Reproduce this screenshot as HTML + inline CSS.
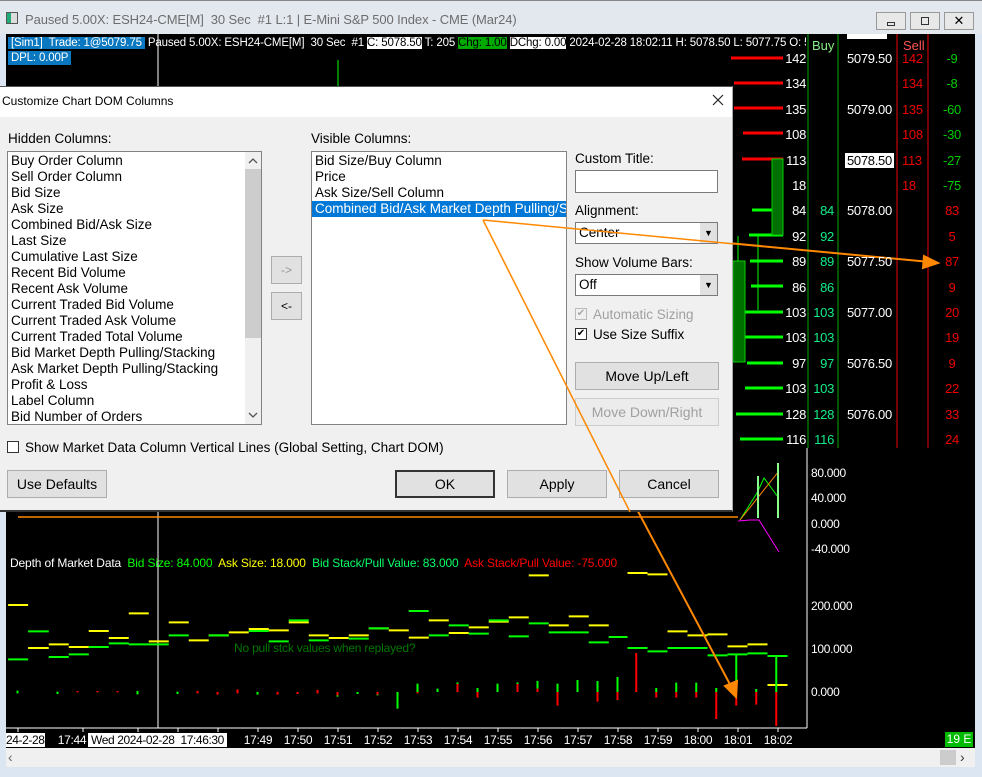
<!DOCTYPE html>
<html><head><meta charset="utf-8"><style>
*{margin:0;padding:0;box-sizing:border-box}
body{width:982px;height:777px;background:#dce6f2;position:relative;overflow:hidden;font-family:"Liberation Sans",sans-serif;font-size:13px}
.a{position:absolute;white-space:nowrap}
.btn{position:absolute;background:#e1e1e1;border:1px solid #adadad;text-align:center;color:#000;font-size:14px}
.list div{height:16px;line-height:16px;font-size:13.5px;padding-left:3px}
.t{position:absolute;top:733px;font-size:12px;color:#fff;width:40px;text-align:center;letter-spacing:-0.3px}
</style></head><body>
<div class="a" style="left:0;top:0;width:982px;height:34px;background:#e3e8ef;border-top:1px solid #888"></div>
<div class="a" style="left:6px;top:12px;width:12px;height:12px;border:1px solid #555;background:linear-gradient(90deg,#2a7 0 40%,#ddd 40%)"></div>
<div class="a" style="left:25px;top:12px;color:#6d6d6d;font-size:13px;letter-spacing:-0.1px">Paused 5.00X: ESH24-CME[M]&nbsp; 30 Sec&nbsp; #1 L:1 | E-Mini S&amp;P 500 Index - CME (Mar24)</div>
<div class="a" style="left:876px;top:12px;width:30px;height:18px;border:1px solid #999;background:#e8e8e8"><div class="a" style="left:10px;top:9px;width:8px;height:4px;border:1px solid #333"></div></div>
<div class="a" style="left:910px;top:12px;width:30px;height:18px;border:1px solid #999;background:#e8e8e8"><div class="a" style="left:10px;top:4px;width:8px;height:8px;border:1px solid #333"></div></div>
<div class="a" style="left:944px;top:12px;width:30px;height:18px;border:1px solid #999;background:#e8e8e8;text-align:center;font-size:13px;line-height:16px">✕</div>
<div class="a" style="left:6px;top:34px;width:969px;height:714px;background:#000"></div>
<div class="a" style="left:6px;top:748px;width:969px;height:19px;background:#f0f0f0"></div>
<div class="a" style="left:8px;top:749px;color:#666;font-size:14px">‹</div>
<div class="a" style="left:940px;top:750px;width:16px;height:15px;background:#ccc"></div>
<div class="a" style="left:960px;top:749px;color:#333;font-size:14px">›</div>
<div class="a" style="left:8px;top:36px;font-size:11.5px;letter-spacing:-0.15px;color:#fff;line-height:14px;width:798px;overflow:hidden">
<span style="background:#0a78c0;padding:0 3px">[Sim1]&nbsp; Trade: 1@5079.75</span> Paused 5.00X: ESH24-CME[M]&nbsp; 30 Sec&nbsp; #1 <span style="background:#fff;color:#000">C: 5078.50</span> T: 205 <span style="background:#0a0;color:#000">Chg: 1.00</span> <span style="background:#fff;color:#000">DChg: 0.00</span> 2024-02-28 18:02:11 H: 5078.50 L: 5077.75 O: 50</div>
<div class="a" style="left:8px;top:51px;font-size:11.5px;letter-spacing:-0.15px;color:#fff;background:#0a78c0;padding:0 3px;line-height:14px">DPL: 0.00P</div>
<svg class="a" style="left:0;top:0" width="982" height="777">
<line x1="158" y1="34" x2="158" y2="728" stroke="#fff"/>
<line x1="338" y1="60" x2="338" y2="86" stroke="#0f0"/>
<line x1="808" y1="34" x2="808" y2="448" stroke="#0a0"/>
<line x1="838" y1="34" x2="838" y2="448" stroke="#0a0"/>
<line x1="897" y1="34" x2="897" y2="448" stroke="#e00"/>
<line x1="928" y1="34" x2="928" y2="448" stroke="#e00"/>
<g stroke-width="3">
<line x1="731" y1="58" x2="783" y2="58" stroke="#f00"/>
<line x1="734" y1="83" x2="783" y2="83" stroke="#f00"/>
<line x1="734" y1="108" x2="783" y2="108" stroke="#f00"/>
<line x1="743" y1="133" x2="783" y2="133" stroke="#f00"/>
<line x1="742" y1="159" x2="783" y2="159" stroke="#f00"/>
<line x1="776" y1="184" x2="783" y2="184" stroke="#f00"/>
<line x1="752" y1="210" x2="783" y2="210" stroke="#0f0"/>
<line x1="749" y1="235" x2="783" y2="235" stroke="#0f0"/>
<line x1="750" y1="261" x2="783" y2="261" stroke="#0f0"/>
<line x1="751" y1="286" x2="783" y2="286" stroke="#0f0"/>
<line x1="745" y1="312" x2="783" y2="312" stroke="#0f0"/>
<line x1="745" y1="337" x2="783" y2="337" stroke="#0f0"/>
<line x1="747" y1="363" x2="783" y2="363" stroke="#0f0"/>
<line x1="745" y1="388" x2="783" y2="388" stroke="#0f0"/>
<line x1="736" y1="414" x2="783" y2="414" stroke="#0f0"/>
<line x1="740" y1="439" x2="783" y2="439" stroke="#0f0"/>
</g>
<rect x="772" y="159" width="11" height="76" fill="#007000" stroke="#0c0"/>
<rect x="733" y="261" width="12" height="101" fill="#007000" stroke="#0c0"/>
<line x1="758" y1="235" x2="758" y2="310" stroke="#0f0"/>
<line x1="738" y1="236" x2="738" y2="261" stroke="#0f0"/>
<line x1="807" y1="448" x2="807" y2="728" stroke="#fff"/>
<line x1="18" y1="517" x2="738" y2="517" stroke="#f80" stroke-width="1.5"/>
<polyline points="740,520 757,493 764,478 778,497" fill="none" stroke="#0f0"/>
<polyline points="740,520 779,471" fill="none" stroke="#f80"/>
<polyline points="738,521 750,520 759,520 779,552" fill="none" stroke="#f0f"/>
<line x1="758" y1="476" x2="758" y2="518" stroke="#8f8" stroke-width="2"/>
<line x1="778" y1="463" x2="778" y2="518" stroke="#8f8" stroke-width="2"/>
<g transform="translate(0,500) scale(0.625,0.3333)" stroke-width="2">
<path stroke="#ff0" vector-effect="non-scaling-stroke" d="M13 315H45M45 444H78M78 433H110M110 441H142M142 393H174M174 414H206M206 340H238M238 424H270M270 367H302M302 421H334M334 406H366M366 397H398M398 387H430M430 391H462M462 367H494M494 406H526M526 414H558M558 406H590M590 385H622M622 391H654M654 413H686M686 361H718M718 399H750M750 382H782M782 365H814M814 352H846M846 226H878M878 376H910M910 349H942M942 376H974M1004 219H1036M1036 223H1068M1068 394H1100M1100 406H1132M1132 403H1164M1164 439H1196M1196 433H1228M1228 555H1260"/>
<path stroke="#0f0" vector-effect="non-scaling-stroke" d="M13 478H45M45 394H78M78 471H110M110 463H142M142 441H174M174 430H206M206 433H238M238 433H270M270 406H302M334 406H366M398 393H430M430 424H462M462 361H494M494 421H526M558 416H590M590 385H622M654 333H686M686 406H718M718 376H750M750 401H782M782 361H814M814 409H846M846 370H878M878 397H942M942 427H974M974 411H1004M1004 444H1036M1036 454H1068M1068 444H1132M1132 466H1164M1164 463H1196M1196 460H1228M1228 468H1260"/>
<path stroke="#0f0" vector-effect="non-scaling-stroke" d="M28 572V580M92 575V582M220 573V583M284 575V582M412 576V584M540 576V590M572 576V582M604 576V586M636 576V626M668 551V576M700 566V576M732 547V552M764 564V576M796 551V576M828 547V552M860 543V566M892 551V576M924 540V576M956 543V576M988 531V576M1050 564V576M1082 548V576M1114 548V576M1146 564V576M1178 463V576M1210 567V576M1242 468V576"/>
<path stroke="#f00" vector-effect="non-scaling-stroke" d="M124 573V577M156 573V577M188 573V577M316 573V580M348 576V584M380 568V580M444 576V584M476 576V582M508 570V580M540 576V586M604 576V584M668 576V580M732 552V576M764 576V593M828 552V576M860 566V576M892 576V617M956 576V605M988 576V600M1018 459V576M1050 576V593M1082 576V593M1114 576V593M1146 576V657M1178 576V617M1210 576V614M1242 576V678"/>
</g>
<line x1="6" y1="728" x2="807" y2="728" stroke="#fff"/>
<g stroke="#fff"><path d="M18 728v4M83 728v4M138 728v4M178 728v4M218 728v4M258 728v4M298 728v4M338 728v4M378 728v4M418 728v4M458 728v4M498 728v4M538 728v4M578 728v4M618 728v4M658 728v4M698 728v4M738 728v4M778 728v4"/></g>
<g stroke="#f80" stroke-width="2" fill="#f80">
<line x1="483" y1="220" x2="930" y2="262"/>
<polygon points="938,263 924,256 923,268"/>
<line x1="483" y1="220" x2="733" y2="690"/>
<polygon points="736,697 725,686 737,681"/>
</g>
</svg>
<div class="a" style="left:760px;top:46px;width:46px;text-align:right;color:#fff;font-size:13px;line-height:25.4px;letter-spacing:-0.3px">142<br>134<br>135<br>108<br>113<br>18<br>84<br>92<br>89<br>86<br>103<br>103<br>97<br>103<br>128<br>116</div>
<div class="a" style="left:808px;top:46px;width:26px;text-align:right;color:#1e8;font-size:13px;line-height:25.4px;letter-spacing:-0.3px"><br><br><br><br><br><br>84<br>92<br>89<br>86<br>103<br>103<br>97<br>103<br>128<br>116</div>
<div class="a" style="left:812px;top:38px;color:#8e8;font-size:13px">Buy</div>
<div class="a" style="left:903px;top:38px;color:#f55;font-size:13px">Sell</div>
<div class="a" style="left:847px;top:34px;width:40px;height:5px;background:#fff"></div>
<div class="a" style="left:847px;top:46px;color:#fff;font-size:13px;line-height:25.4px;letter-spacing:-0.3px">5079.50<br><br>5079.00<br><br><span style="background:#fff;color:#000;padding:0 2px;margin-left:-2px">5078.50</span><br><br>5078.00<br><br>5077.50<br><br>5077.00<br><br>5076.50<br><br>5076.00</div>
<div class="a" style="left:902px;top:46px;color:#e00;font-size:13px;line-height:25.4px;letter-spacing:-0.3px">142<br>134<br>135<br>108<br>113<br>18</div>
<div class="a" style="left:930px;top:46px;width:44px;text-align:center;font-size:13px;line-height:25.4px;letter-spacing:-0.3px"><span style="color:#0c0">-9<br>-8<br>-60<br>-30<br>-27<br>-75</span><br><span style="color:#e00">83<br>5<br>87<br>9<br>20<br>19<br>9<br>22<br>33<br>24</span></div>
<div class="a" style="left:811px;top:461px;color:#fff;font-size:12px;line-height:25.4px;letter-spacing:-0.3px">80.000<br>40.000<br>0.000<br>-40.000</div>
<div class="a" style="left:811px;top:599px;color:#fff;font-size:12px;letter-spacing:-0.3px">200.000</div>
<div class="a" style="left:811px;top:642px;color:#fff;font-size:12px;letter-spacing:-0.3px">100.000</div>
<div class="a" style="left:811px;top:685px;color:#fff;font-size:12px;letter-spacing:-0.3px">0.000</div>
<div class="a" style="left:10px;top:556px;font-size:12px;letter-spacing:-0.15px;color:#fff">Depth of Market Data&nbsp; <span style="color:#0f0">Bid Size: 84.000</span>&nbsp; <span style="color:#ff0">Ask Size: 18.000</span>&nbsp; <span style="color:#0f6">Bid Stack/Pull Value: 83.000</span>&nbsp; <span style="color:#f00">Ask Stack/Pull Value: -75.000</span></div>
<div class="a" style="left:234px;top:641px;font-size:12px;letter-spacing:-0.2px;color:#070">No pull stck values when replayed?</div>
<div class="a" style="left:6px;top:733px;font-size:12px;letter-spacing:-0.4px;background:#fff;color:#000">24-2-28</div>
<div class="t" style="left:52px">17:44</div>
<div class="a" style="left:88px;top:733px;font-size:12px;letter-spacing:-0.4px;background:#fff;color:#000;padding:0 3px">Wed 2024-02-28&nbsp; 17:46:30</div>
<div class="t" style="left:238px">17:49</div><div class="t" style="left:278px">17:50</div><div class="t" style="left:318px">17:51</div><div class="t" style="left:358px">17:52</div><div class="t" style="left:398px">17:53</div><div class="t" style="left:438px">17:54</div><div class="t" style="left:478px">17:55</div><div class="t" style="left:518px">17:56</div><div class="t" style="left:558px">17:57</div><div class="t" style="left:598px">17:58</div><div class="t" style="left:638px">17:59</div><div class="t" style="left:678px">18:00</div><div class="t" style="left:718px">18:01</div><div class="t" style="left:758px">18:02</div>
<div class="a" style="left:945px;top:732px;width:28px;height:15px;background:#0b0;color:#fff;font-size:12px;text-align:center">19 E</div>
<div class="a" style="left:0;top:86px;width:733px;height:426px;background:#f0f0f0;border-top:1px solid #555;border-right:1px solid #aaa;border-bottom:2px solid #333"></div>
<div class="a" style="left:0;top:87px;width:732px;height:30px;background:#fff"></div>
<div class="a" style="left:2px;top:94px;font-size:12px;color:#000">Customize Chart DOM Columns</div>
<svg class="a" style="left:712px;top:94px" width="12" height="12"><path d="M1 1L11 11M11 1L1 11" stroke="#222" stroke-width="1.2"/></svg>
<div class="a" style="left:8px;top:131px;font-size:13.5px">Hidden Columns:</div>
<div class="a" style="left:311px;top:131px;font-size:13.5px">Visible Columns:</div>
<div class="a list" style="left:7px;top:151px;width:255px;height:274px;background:#fff;border:1px solid #828282;padding-top:1px">
<div>Buy Order Column</div><div>Sell Order Column</div><div>Bid Size</div><div>Ask Size</div><div>Combined Bid/Ask Size</div><div>Last Size</div><div>Cumulative Last Size</div><div>Recent Bid Volume</div><div>Recent Ask Volume</div><div>Current Traded Bid Volume</div><div>Current Traded Ask Volume</div><div>Current Traded Total Volume</div><div>Bid Market Depth Pulling/Stacking</div><div>Ask Market Depth Pulling/Stacking</div><div>Profit &amp; Loss</div><div>Label Column</div><div>Bid Number of Orders</div>
</div>
<div class="a" style="left:245px;top:152px;width:16px;height:272px;background:#f0f0f0"></div>
<div class="a" style="left:245px;top:169px;width:16px;height:169px;background:#cdcdcd"></div>
<svg class="a" style="left:248px;top:157px" width="10" height="8"><path d="M1 6L5 2L9 6" stroke="#555" fill="none" stroke-width="1.3"/></svg>
<svg class="a" style="left:248px;top:411px" width="10" height="8"><path d="M1 2L5 6L9 2" stroke="#555" fill="none" stroke-width="1.3"/></svg>
<div class="a list" style="left:311px;top:151px;width:256px;height:274px;background:#fff;border:1px solid #828282;padding-top:1px;overflow:hidden">
<div>Bid Size/Buy Column</div><div>Price</div><div>Ask Size/Sell Column</div><div style="background:#0078d7;color:#fff">Combined Bid/Ask Market Depth Pulling/Stacking</div>
</div>
<div class="btn" style="left:271px;top:256px;width:31px;height:28px;line-height:26px;color:#999;font-size:12px">-&gt;</div>
<div class="btn" style="left:271px;top:292px;width:31px;height:28px;line-height:26px;font-size:12px">&lt;-</div>
<div class="a" style="left:575px;top:151px;font-size:13.5px">Custom Title:</div>
<div class="a" style="left:575px;top:170px;width:143px;height:23px;background:#fff;border:1px solid #7a7a7a"></div>
<div class="a" style="left:575px;top:203px;font-size:13.5px">Alignment:</div>
<div class="a" style="left:575px;top:222px;width:143px;height:22px;background:#fff;border:1px solid #7a7a7a;padding-left:3px;line-height:20px;font-size:13.5px">Center<div class="a" style="right:0;top:0;width:17px;height:20px;background:#e1e1e1;text-align:center;font-size:9px;line-height:20px">▼</div></div>
<div class="a" style="left:575px;top:255px;font-size:13.5px">Show Volume Bars:</div>
<div class="a" style="left:575px;top:274px;width:143px;height:22px;background:#fff;border:1px solid #7a7a7a;padding-left:3px;line-height:20px;font-size:13.5px">Off<div class="a" style="right:0;top:0;width:17px;height:20px;background:#e1e1e1;text-align:center;font-size:9px;line-height:20px">▼</div></div>
<div class="a" style="left:575px;top:308px;width:12px;height:12px;border:1px solid #bbb;background:#f0f0f0;font-size:10px;line-height:10px;color:#aaa;text-align:center">✔</div>
<div class="a" style="left:593px;top:307px;font-size:13.5px;color:#a0a0a0">Automatic Sizing</div>
<div class="a" style="left:575px;top:328px;width:12px;height:12px;border:1px solid #333;background:#fff;font-size:10px;line-height:10px;text-align:center">✔</div>
<div class="a" style="left:593px;top:327px;font-size:13.5px">Use Size Suffix</div>
<div class="btn" style="left:575px;top:362px;width:144px;height:28px;line-height:26px">Move Up/Left</div>
<div class="btn" style="left:575px;top:398px;width:144px;height:28px;line-height:26px;color:#a0a0a0;background:#ececec;border-color:#ccc">Move Down/Right</div>
<div class="a" style="left:7px;top:441px;width:12px;height:12px;border:1px solid #333;background:#fff"></div>
<div class="a" style="left:25px;top:440px;font-size:13.5px">Show Market Data Column Vertical Lines (Global Setting, Chart DOM)</div>
<div class="btn" style="left:7px;top:470px;width:100px;height:28px;line-height:26px">Use Defaults</div>
<div class="btn" style="left:395px;top:470px;width:100px;height:28px;line-height:24px;border:2px solid #333">OK</div>
<div class="btn" style="left:507px;top:470px;width:100px;height:28px;line-height:26px">Apply</div>
<div class="btn" style="left:619px;top:470px;width:100px;height:28px;line-height:26px">Cancel</div>
<svg class="a" style="left:0;top:0" width="982" height="777"><g stroke="#f80" stroke-width="1.5"><line x1="483" y1="220" x2="735" y2="244"/><line x1="483" y1="220" x2="630" y2="512"/></g></svg>
</body></html>
